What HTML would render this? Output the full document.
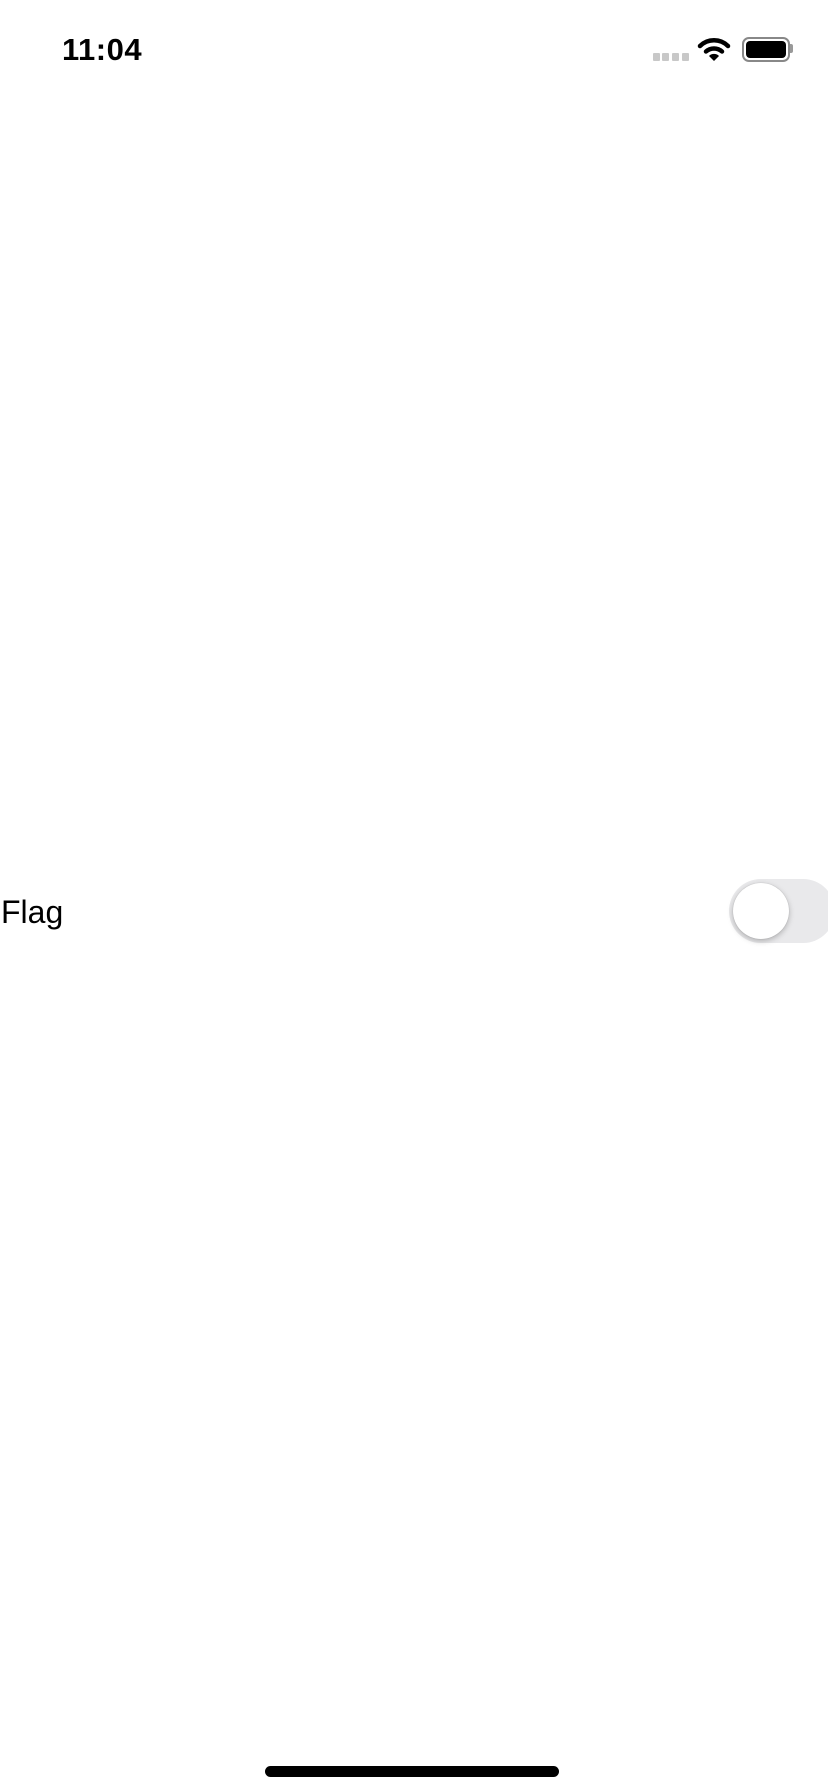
<!DOCTYPE html>
<html><head><style>
html,body{margin:0;padding:0;width:828px;height:1792px;background:#fff;overflow:hidden;font-family:"Liberation Sans",sans-serif;position:relative}
.t{position:absolute;left:62px;top:32px;font-size:31px;font-weight:bold;color:#000;letter-spacing:0.5px}
.flag{position:absolute;left:1px;top:894px;font-size:32px;color:#000}
.sw{position:absolute;left:729px;top:879px;width:106px;height:64px;border-radius:32px;background:#e9e9eb}
.knob{position:absolute;left:4px;top:4px;width:56px;height:56px;border-radius:50%;background:#fff;box-shadow:0 2px 6px rgba(0,0,0,.25),0 0 1px rgba(0,0,0,.2)}
.home{position:absolute;left:265px;top:1766px;width:294px;height:11px;border-radius:6px;background:#000}
.dot{position:absolute;top:53px;width:7px;height:8px;background:#c8c8c8;border-radius:1px}
</style></head><body>
<div class="t">11:04</div>
<div class="dot" style="left:653px"></div><div class="dot" style="left:662px"></div><div class="dot" style="left:672px"></div><div class="dot" style="left:682px"></div>
<svg style="position:absolute;left:697px;top:36px" width="34" height="26" viewBox="0 0 34 26">
<path d="M3 10 A20 20 0 0 1 31 10" fill="none" stroke="#000" stroke-width="4.5" stroke-linecap="round"/>
<path d="M9 15.5 A12 12 0 0 1 25 15.5" fill="none" stroke="#000" stroke-width="4.5" stroke-linecap="round"/>
<path d="M17 25 L12 20 A7 7 0 0 1 22 20 Z" fill="#000"/>
</svg>
<div style="position:absolute;left:742px;top:37px;width:44px;height:21px;border:2px solid #888;border-radius:7px"></div>
<div style="position:absolute;left:746px;top:41px;width:40px;height:17px;background:#000;border-radius:4px"></div>
<div style="position:absolute;left:790px;top:44px;width:3px;height:9px;background:#999;border-radius:0 2px 2px 0"></div>
<div class="flag">Flag</div>
<div class="sw"><div class="knob"></div></div>
<div class="home"></div>
</body></html>
